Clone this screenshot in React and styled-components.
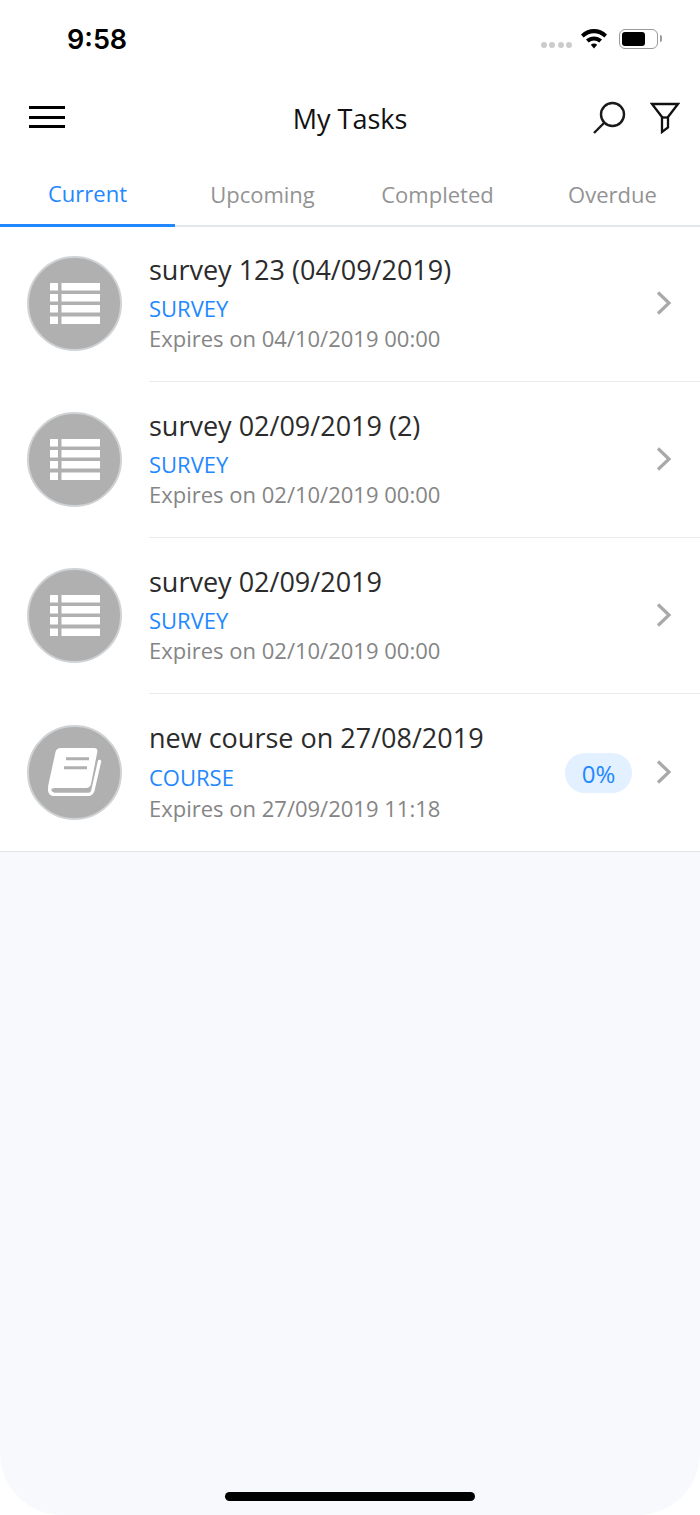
import React from "react";
import styled, { createGlobalStyle } from "styled-components";

const tasks = [
    { title: "survey 123 (04/09/2019)", type: "SURVEY", expires: "Expires on 04/10/2019 00:00", kind: "survey" },
    { title: "survey 02/09/2019 (2)", type: "SURVEY", expires: "Expires on 02/10/2019 00:00", kind: "survey" },
    { title: "survey 02/09/2019", type: "SURVEY", expires: "Expires on 02/10/2019 00:00", kind: "survey" },
    { title: "new course on 27/08/2019", type: "COURSE", expires: "Expires on 27/09/2019 11:18", kind: "course", progress: "0%" },
];

const tabs = ["Current", "Upcoming", "Completed", "Overdue"];

const SurveyIcon = () => (
    <svg width="50" height="41" viewBox="0 0 50 41" fill="#fff">
        {[0, 11, 22, 33.5].map((y) => (
            <React.Fragment key={y}>
                <rect x="0" y={y} width="8" height="7.500" />
                <rect x="11.500" y={y} width="38.500" height="7.500" />
            </React.Fragment>
        ))}
    </svg>
);

const CourseIcon = () => (
    <svg width="54" height="48" viewBox="0 0 54 48">
        <path d="M13 0H46Q50 0 49.300 4L43 36Q42 40 38 40H7Q3 40 2.800 42.500Q3 45.500 7 45.500L2 44Q-.5 42 .300 37L7.500 4Q8.500 0 13 0z" fill="#fff" />
        <path d="M1.500 41.500Q2 46.500 7.500 46.500H39.500Q44 46.500 45 42L51.500 13.500" fill="none" stroke="#fff" strokeWidth="3.400" strokeLinecap="round" />
        <path d="M18 10.800H41M16 19.800H39" stroke="#b0b0b0" strokeWidth="3" />
    </svg>
);

const Chevron = () => (
    <svg width="16" height="24" viewBox="0 0 16 24" fill="none">
        <path d="M2 1.500 13 12 2 22.500" stroke="#a9a9a9" strokeWidth="3.200" />
    </svg>
);

function App() {
    return (
        <>
            <GlobalStyle />
            <Screen>
                <Header>
                    <StatusBar>
                        <Clock>9:58</Clock>
                        <StatusIcons>
                            <Signal>
                                <i />
                                <i />
                                <i />
                                <i />
                            </Signal>
                            <WifiIcon width="28" height="21" viewBox="0 0 28 21">
                                <path d="M1 6.500C8.500-.7 19.500-.7 27 6.500l-2.600 2.900C18.300 3.700 9.700 3.700 3.600 9.400z" fill="#000" />
                                <path d="M6 11.600c4.800-4.300 11.200-4.300 16 0l-2.700 2.900c-3.300-2.800-7.300-2.800-10.600 0z" fill="#000" />
                                <path d="M10.800 16.700c2-1.600 4.400-1.600 6.400 0L14 20.500z" fill="#000" />
                            </WifiIcon>
                            <Battery>
                                <BatteryFill />
                            </Battery>
                        </StatusIcons>
                    </StatusBar>
                    <NavBar>
                        <Burger>
                            <span />
                            <span />
                            <span />
                        </Burger>
                        <NavTitle>My Tasks</NavTitle>
                        <NavActions>
                            <svg width="34" height="34" viewBox="0 0 34 34" fill="none" stroke="#1a1a1a">
                                <circle cx="20.500" cy="13.500" r="11.500" strokeWidth="2.400" />
                                <path d="M12 22 2 32" strokeWidth="2.400" />
                            </svg>
                            <svg width="30" height="32" viewBox="0 0 30 32" fill="none" stroke="#111">
                                <path d="M2 2h26L18 15v10.500l-6 4.500V15z" strokeWidth="2.300" />
                                <path d="M12 15.500h6" strokeWidth="2.300" />
                            </svg>
                        </NavActions>
                    </NavBar>
                    <TabBar>
                        {tabs.map((tab, i) => (
                            <Tab key={tab} $active={i === 0}>
                                {tab}
                            </Tab>
                        ))}
                    </TabBar>
                </Header>
                <TaskList>
                    {tasks.map((task, i) => (
                        <TaskRow key={task.title}>
                            <Avatar>{task.kind === "course" ? <CourseIcon /> : <SurveyIcon />}</Avatar>
                            <TaskBody $last={i === tasks.length - 1}>
                                <TaskText>
                                    <TaskTitle>{task.title}</TaskTitle>
                                    <TaskType $last={i === tasks.length - 1}>{task.type}</TaskType>
                                    <TaskExpiry $last={i === tasks.length - 1}>{task.expires}</TaskExpiry>
                                </TaskText>
                                {task.progress && <Progress>{task.progress}</Progress>}
                                <Chevron />
                            </TaskBody>
                        </TaskRow>
                    ))}
                </TaskList>
                <HomeArea>
                    <HomeBar />
                </HomeArea>
            </Screen>
        </>
    );
}

export default App;

const GlobalStyle = createGlobalStyle`
    html, body {
        margin: 0;
        padding: 0;
        background: #fff;
        font-family: "Open Sans", sans-serif;
    }
`;

const Screen = styled.div`
    width: 700px;
    height: 1515px;
    display: flex;
    flex-direction: column;
    background: #f7f9fd;
    border-radius: 0 0 62px 62px;
    overflow: hidden;
`;

const Header = styled.div`
    position: relative;
    z-index: 1;
    background: #fff;
`;

const StatusBar = styled.div`
    height: 78px;
    display: flex;
    justify-content: space-between;
    align-items: center;
    padding: 0 42px 0 67px;
`;

const Clock = styled.span`
    font-family: "Inter", sans-serif;
    font-weight: 600;
    font-size: 27px;
    color: #000;
`;

const StatusIcons = styled.div`
    display: flex;
    align-items: center;
    gap: 9px;
`;

const Signal = styled.div`
    display: flex;
    gap: 2.500px;
    margin-top: 12px;
    margin-right: -1px;

    i {
        width: 6px;
        height: 6px;
        border-radius: 50%;
        background: #cccccc;
    }
`;

const WifiIcon = styled.svg`
    margin: -2px 1px 0 0;
`;

const Battery = styled.div`
    position: relative;
    box-sizing: border-box;
    width: 39px;
    height: 20px;
    border: 1.500px solid #9a9a9a;
    border-radius: 6px;
    display: flex;
    align-items: center;
    padding-left: 2px;
    margin-left: 1px;

    &::after {
        content: "";
        position: absolute;
        right: -5px;
        top: 5px;
        width: 2px;
        height: 7px;
        background: #9a9a9a;
        border-radius: 0 2px 2px 0;
    }
`;

const BatteryFill = styled.div`
    width: 23px;
    height: 14px;
    background: #000;
    border-radius: 3px;
`;

const NavBar = styled.div`
    position: relative;
    height: 80px;
    display: flex;
    justify-content: space-between;
    align-items: center;
    padding: 0 20px 0 29px;
`;

const Burger = styled.div`
    display: flex;
    flex-direction: column;
    gap: 6.500px;
    margin-top: -2px;

    span {
        width: 36px;
        height: 3px;
        background: #000;
    }
`;

const NavTitle = styled.div`
    position: absolute;
    left: 0;
    right: 0;
    text-align: center;
    font-size: 27px;
    color: #111;
    pointer-events: none;
`;

const NavActions = styled.div`
    display: flex;
    align-items: center;
    gap: 24px;
    margin-top: -1px;
`;

const TabBar = styled.div`
    height: 69px;
    display: grid;
    grid-template-columns: repeat(4, 175px);
    box-sizing: border-box;
    border-bottom: 2px solid #e3e6ea;
`;

const Tab = styled.div`
    display: flex;
    justify-content: center;
    align-items: center;
    height: 69px;
    box-sizing: border-box;
    padding-top: ${(p) => (p.$active ? "4px" : "2px")};
    font-size: 22px;
    color: ${(p) => (p.$active ? "#2288ff" : "#939393")};
    border-bottom: ${(p) => (p.$active ? "3px solid #2288ff" : "none")};
`;

const TaskList = styled.div`
    margin-top: -2px;
    background: #fff;
    border-bottom: 1px solid #e3e6ea;
`;

const TaskRow = styled.div`
    display: flex;
    align-items: stretch;
    padding-left: 27px;
`;

const Avatar = styled.div`
    flex: none;
    align-self: center;
    width: 95px;
    height: 95px;
    box-sizing: border-box;
    margin-right: 27px;
    border-radius: 50%;
    background: #b0b0b0;
    border: 2px solid #cfd3d6;
    display: flex;
    align-items: center;
    justify-content: center;
`;

const TaskBody = styled.div`
    flex: 1;
    height: ${(p) => (p.$last ? "158px" : "156px")};
    box-sizing: border-box;
    display: flex;
    align-items: center;
    padding-right: 28px;
    box-shadow: ${(p) => (p.$last ? "none" : "0 1px 0 #e8eaed")};
`;

const TaskText = styled.div`
    flex: 1;
    display: flex;
    flex-direction: column;
    margin-top: -3px;
`;

const TaskTitle = styled.div`
    font-size: 27px;
    line-height: 40px;
    margin-top: -1px;
    color: #2b2b2b;
`;

const TaskType = styled.div`
    font-size: 22px;
    line-height: 30px;
    margin-top: ${(p) => (p.$last ? "4px" : "3px")};
    color: #2288ff;
`;

const TaskExpiry = styled.div`
    font-size: 22px;
    line-height: 30px;
    margin-top: ${(p) => (p.$last ? "1px" : "0")};
    color: #858585;
`;

const Progress = styled.div`
    width: 67px;
    height: 40px;
    margin: 2px 24px 0 0;
    border-radius: 20px;
    background: #e2f0ff;
    color: #2288ff;
    font-size: 24px;
    display: flex;
    align-items: center;
    justify-content: center;
`;

const HomeArea = styled.div`
    flex: 1;
    display: flex;
    align-items: flex-end;
    justify-content: center;
    padding-bottom: 14px;
`;

const HomeBar = styled.div`
    width: 250px;
    height: 9px;
    border-radius: 5px;
    background: #000;
`;
